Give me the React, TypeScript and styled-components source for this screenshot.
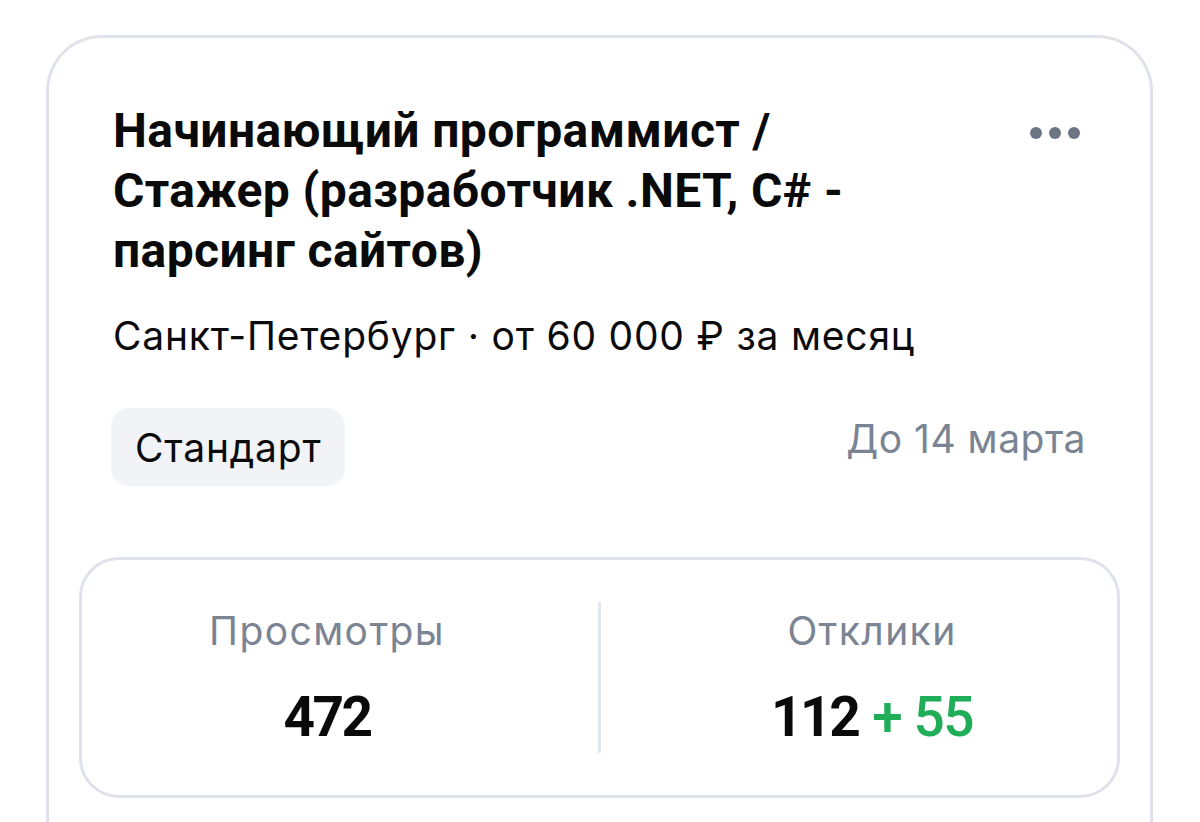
import React from "react";
import styled, { createGlobalStyle } from "styled-components";

const Global = createGlobalStyle`
  html, body { margin: 0; padding: 0; background: #ffffff; }
  body { font-family: Inter, Roboto, "Noto Sans", "Liberation Sans", sans-serif; color: #0a0a0a; overflow: hidden; }
  * { box-sizing: border-box; }
`;

const Page = styled.div`
  width: 1200px;
  height: 822px;
  padding: 35px 47px 0 46px;
  overflow: hidden;
`;

const Card = styled.section`
  border: 3px solid #dfe3e9;
  border-bottom: none;
  border-radius: 56px 56px 0 0;
  padding: 63px 64px 0 64px;
  min-height: 900px;
`;

const Header = styled.div`
  display: flex;
  justify-content: space-between;
  align-items: flex-start;
`;

const Title = styled.h1`
  margin: 0;
  font-family: Roboto, "Noto Sans", sans-serif;
  font-size: 48px;
  line-height: 60px;
  font-weight: 700;
  letter-spacing: 0.4px;
  max-width: 780px;
`;

const MoreButton = styled.button`
  display: flex;
  gap: 7px;
  border: none;
  background: none;
  padding: 0;
  margin-top: 26px;
  margin-right: 6px;
  cursor: pointer;
`;

const Dot = styled.span`
  width: 12px;
  height: 12px;
  border-radius: 50%;
  background: #6b7584;
`;

const Meta = styled.p`
  margin: 31px 0 0;
  font-size: 39px;
  line-height: 48px;
  font-weight: 400;
  letter-spacing: 0.8px;
`;

const TagRow = styled.div`
  display: flex;
  justify-content: space-between;
  align-items: center;
  margin-top: 48px;
  margin-left: -2px;
`;

const Tag = styled.span`
  display: inline-flex;
  align-items: center;
  height: 78px;
  padding: 0 24px;
  border-radius: 18px;
  background: #f1f3f7;
  font-size: 39px;
  letter-spacing: 0.8px;
`;

const Deadline = styled.span`
  font-size: 39px;
  color: #7a8493;
  letter-spacing: 0.5px;
  margin-top: -18px;
`;

const Stats = styled.div`
  margin: 71px -34px 0;
  height: 241px;
  border: 3px solid #dfe3e9;
  border-radius: 40px;
  display: grid;
  grid-template-columns: 1fr 3px 1fr;
  column-gap: 26px;
  align-items: center;
`;

const Divider = styled.div`
  width: 3px;
  height: 151px;
  background: #e3e6eb;
`;

const Stat = styled.div`
  display: flex;
  flex-direction: column;
  align-items: center;
  gap: 33px;
`;

const StatLabel = styled.span`
  font-size: 39px;
  line-height: 46px;
  color: #7a8493;
  letter-spacing: 1.4px;
`;

const StatValue = styled.span`
  font-family: Roboto, "Noto Sans", sans-serif;
  font-size: 55px;
  line-height: 60px;
  font-weight: 700;
  letter-spacing: -2.5px;
`;

const Plus = styled.span`
  color: #1fae57;
  font-weight: 500;
  letter-spacing: -1.5px;
  margin-left: 14px;
`;

export default function App() {
  return (
    <>
      <Global />
      <Page>
        <Card>
          <Header>
            <Title>
              Начинающий программист / Стажер (разработчик .NET, C# - парсинг сайтов)
            </Title>
            <MoreButton aria-label="Ещё">
              <Dot />
              <Dot />
              <Dot />
            </MoreButton>
          </Header>
          <Meta>Санкт-Петербург · от 60 000 ₽ за месяц</Meta>
          <TagRow>
            <Tag>Стандарт</Tag>
            <Deadline>До 14 марта</Deadline>
          </TagRow>
          <Stats>
            <Stat>
              <StatLabel>Просмотры</StatLabel>
              <StatValue>472</StatValue>
            </Stat>
            <Divider />
            <Stat>
              <StatLabel>Отклики</StatLabel>
              <StatValue>
                112<Plus>+ 55</Plus>
              </StatValue>
            </Stat>
          </Stats>
        </Card>
      </Page>
    </>
  );
}
